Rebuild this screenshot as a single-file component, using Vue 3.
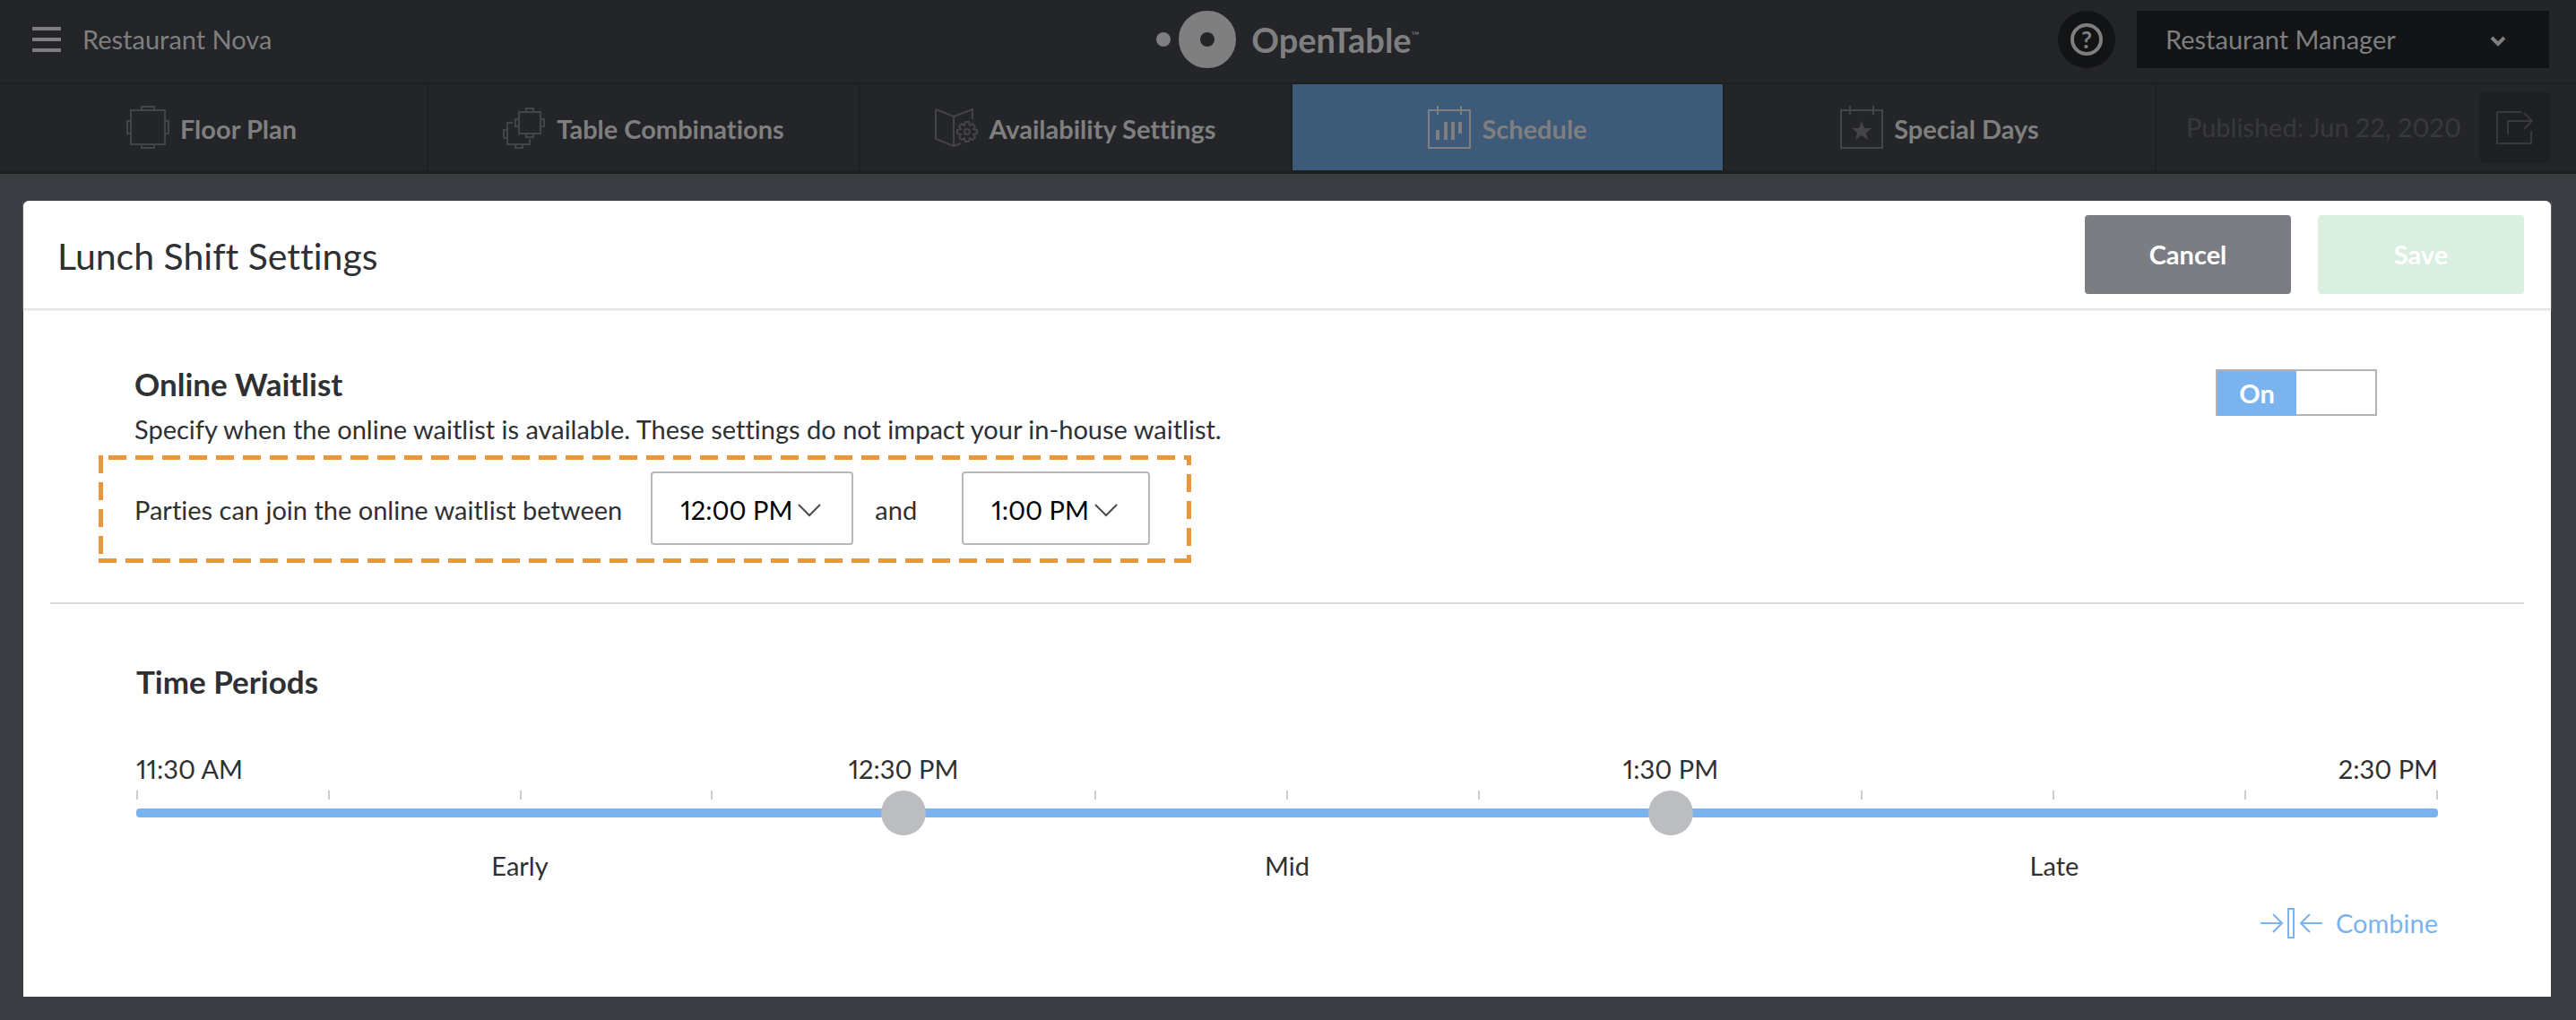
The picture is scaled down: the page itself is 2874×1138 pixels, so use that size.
<template>
    <div class="page">
        <header class="topbar">
            <div class="topbar-left">
                <button type="button" class="menu-button" aria-label="Menu">
                    <span></span>
                    <span></span>
                    <span></span>
                </button>
                <span class="restaurant">Restaurant Nova</span>
            </div>
            <a href="#" class="logo">
                <svg width="90" height="64" viewBox="0 0 90 64" aria-hidden="true">
                    <circle cx="8" cy="32" r="8" fill="currentColor" />
                    <circle cx="57" cy="32" r="20" fill="none" stroke="currentColor" stroke-width="24" />
                </svg>
                <span class="logo-text">OpenTable</span>
                <span class="logo-mark">™</span>
            </a>
            <div class="topbar-right">
                <button type="button" class="help-button" aria-label="Help">
                    <span>?</span>
                </button>
                <div class="role-select">
                    <select v-model="role" aria-label="Role">
                        <option>Restaurant Manager</option>
                        <option>Host</option>
                    </select>
                    <svg width="18" height="12" viewBox="0 0 18 12" aria-hidden="true">
                        <path d="M2 2l7 7 7-7" fill="none" stroke="currentColor" stroke-width="4" />
                    </svg>
                </div>
            </div>
        </header>

        <nav class="tabs">
            <a
                v-for="tab in tabs"
                :key="tab.id"
                href="#"
                class="tab"
                :class="{ active: tab.id === activeTab }"
                @click.prevent="activeTab = tab.id"
            >
                <svg class="tab-icon" width="48" height="48" viewBox="0 0 48 48" aria-hidden="true">
                    <g v-if="tab.id === 'floor'">
                        <rect x="5" y="5" width="38" height="38" />
                        <path d="M17 5V1h14v4M17 43v4h14v-4M5 17H1v14h4M43 17h4v14h-4" />
                    </g>
                    <g v-else-if="tab.id === 'combos'">
                        <rect x="18" y="7" width="24" height="24" />
                        <path d="M26 7V3h8v4M26 31v4h8v-4M18 15h-4v8h4M42 15h4v8h-4" />
                        <path d="M11 19H5v24h25v-6M5 27H1v9h4M14 43v4h8v-4" />
                    </g>
                    <g v-else-if="tab.id === 'availability'">
                        <path d="M1 4l20 8 21-8v11M1 4v33l20 8 8-3M21 12v33" />
                        <circle cx="36" cy="29" r="3" />
                        <path
                            d="M34 18h4l1 4 3-2 3 3-2 3 4 1v4l-4 1 2 3-3 3-3-2-1 4h-4l-1-4-3 2-3-3 2-3-4-1v-4l4-1-2-3 3-3 3 2z"
                        />
                    </g>
                    <g v-else-if="tab.id === 'schedule'">
                        <rect x="1" y="5" width="46" height="42" />
                        <path d="M11 0v10M37 0v10" />
                        <path d="M11 27v11M20 18v20M28 18v20M36 18v13" stroke-width="4" />
                    </g>
                    <g v-else>
                        <rect x="1" y="5" width="46" height="42" />
                        <path d="M11 0v10M37 0v10" />
                        <path
                            class="filled"
                            d="M24 17l3 8h8l-6 5 2 8-7-5-7 5 2-8-6-5h8z"
                        />
                    </g>
                </svg>
                <span>{{ tab.title }}</span>
            </a>
            <div class="published">
                <span>Published: Jun 22, 2020</span>
                <button type="button" class="publish-button" aria-label="Publish">
                    <svg width="42" height="40" viewBox="0 0 42 40" aria-hidden="true">
                        <path
                            d="M28 3H1v35h38V24M13 28V13h27M31 4l9 9-9 9"
                            fill="none"
                            stroke="currentColor"
                            stroke-width="2"
                        />
                    </svg>
                </button>
            </div>
        </nav>

        <main class="card">
            <div class="card-header">
                <h1>Lunch Shift Settings</h1>
                <div class="actions">
                    <button type="button" class="btn btn-cancel">Cancel</button>
                    <button type="button" class="btn btn-save" disabled>Save</button>
                </div>
            </div>

            <section class="waitlist">
                <div class="waitlist-body">
                    <h2>Online Waitlist</h2>
                    <p>
                        Specify when the online waitlist is available. These settings do not impact
                        your in-house waitlist.
                    </p>
                    <div class="highlight">
                        <label for="from">Parties can join the online waitlist between</label>
                        <div class="time-select">
                            <select id="from" v-model="from">
                                <option v-for="time in times" :key="time">{{ time }}</option>
                            </select>
                            <svg width="26" height="16" viewBox="0 0 26 16" aria-hidden="true">
                                <path d="M1 1l12 12L25 1" />
                            </svg>
                        </div>
                        <label for="to" class="and">and</label>
                        <div class="time-select">
                            <select id="to" v-model="to">
                                <option v-for="time in times" :key="time">{{ time }}</option>
                            </select>
                            <svg width="26" height="16" viewBox="0 0 26 16" aria-hidden="true">
                                <path d="M1 1l12 12L25 1" />
                            </svg>
                        </div>
                    </div>
                </div>
                <label class="toggle" :class="{ off: !enabled }">
                    <input v-model="enabled" type="checkbox" aria-label="Online Waitlist" />
                    <span>{{ enabled ? "On" : "Off" }}</span>
                </label>
            </section>

            <section class="periods">
                <h2>Time Periods</h2>
                <div class="hours">
                    <span>11:30 AM</span>
                    <span>{{ formatTime(firstSplit) }}</span>
                    <span>{{ formatTime(secondSplit) }}</span>
                    <span>2:30 PM</span>
                </div>
                <div class="slider">
                    <div class="ticks">
                        <i v-for="n in 13" :key="n"></i>
                    </div>
                    <div class="track"></div>
                    <input
                        v-model.number="firstSplit"
                        type="range"
                        min="0"
                        max="180"
                        step="15"
                        aria-label="Early ends"
                    />
                    <input
                        v-model.number="secondSplit"
                        type="range"
                        min="0"
                        max="180"
                        step="15"
                        aria-label="Late starts"
                    />
                </div>
                <div class="names" :style="{ gridTemplateColumns: nameColumns }">
                    <span>Early</span>
                    <span>Mid</span>
                    <span>Late</span>
                </div>
                <button type="button" class="combine">
                    <svg width="70" height="34" viewBox="0 0 70 34" aria-hidden="true">
                        <path
                            d="M0 17h24M14 7l10 10-10 10M31 1h6v32h-6zM69 17H45M55 7L45 17l10 10"
                            fill="none"
                            stroke="currentColor"
                            stroke-width="2"
                        />
                    </svg>
                    <span>Combine</span>
                </button>
            </section>
        </main>
    </div>
</template>

<script setup>
import { computed, ref } from "vue";

const tabs = [
    { id: "floor", title: "Floor Plan" },
    { id: "combos", title: "Table Combinations" },
    { id: "availability", title: "Availability Settings" },
    { id: "schedule", title: "Schedule" },
    { id: "special", title: "Special Days" },
];

const times = ["11:30 AM", "12:00 PM", "12:30 PM", "1:00 PM", "1:30 PM", "2:00 PM", "2:30 PM"];

const activeTab = ref("schedule");
const role = ref("Restaurant Manager");
const from = ref("12:00 PM");
const to = ref("1:00 PM");
const enabled = ref(true);

// minutes after 11:30 AM
const firstSplit = ref(60);
const secondSplit = ref(120);

const nameColumns = computed(
    () => `${firstSplit.value}fr ${secondSplit.value - firstSplit.value}fr ${180 - secondSplit.value}fr`
);

const formatTime = (offset) => {
    const total = 11 * 60 + 30 + offset;
    const hour = Math.floor(total / 60);
    const minutes = String(total % 60).padStart(2, "0");
    return `${hour > 12 ? hour - 12 : hour}:${minutes} ${hour >= 12 ? "PM" : "AM"}`;
};
</script>

<style>
body {
    margin: 0;
    background: #3c3d42;
}
</style>

<style scoped>
.page {
    box-sizing: border-box;
    min-height: 100vh;
    overflow-x: hidden;
    font-family: Lato, "Liberation Sans", sans-serif;
    font-size: 29px;
    font-variant-ligatures: none;
    font-variant-numeric: proportional-nums;
    line-height: 40px;
    color: #2f3033;
}

.page * {
    box-sizing: border-box;
}

button,
select {
    font: inherit;
    font-variant-ligatures: none;
    font-variant-numeric: proportional-nums;
    cursor: pointer;
}

button {
    border: 0;
    padding: 0;
}

h1,
h2,
p {
    margin: 0;
}

.topbar {
    display: grid;
    grid-template-columns: 1fr auto 1fr;
    align-items: center;
    height: 94px;
    padding: 0 30px 4px;
    border-bottom: 2px solid #1e1f21;
    background: #242529;
    color: #7f7f7f;
}

.topbar-left {
    display: flex;
    align-items: center;
    gap: 24px;
    padding-left: 6px;
}

.menu-button {
    display: flex;
    flex-direction: column;
    gap: 8px;
    width: 32px;
    background: none;
}

.menu-button span {
    height: 4px;
    background: #7f7f7f;
}

.logo {
    display: flex;
    align-items: center;
    color: #7f7f7f;
    text-decoration: none;
}

.logo-text {
    margin-left: 16px;
    font-size: 38px;
    font-weight: 700;
}

.logo-mark {
    align-self: flex-start;
    margin-top: 8px;
    font-size: 12px;
}

.topbar-right {
    display: flex;
    justify-content: flex-end;
    gap: 24px;
}

.help-button {
    display: flex;
    align-items: center;
    justify-content: center;
    width: 64px;
    height: 64px;
    border-radius: 50%;
    background: #131416;
    color: #7f7f7f;
}

.help-button span {
    width: 36px;
    height: 36px;
    border: 4px solid #7f7f7f;
    border-radius: 50%;
    font-size: 26px;
    font-weight: 700;
    line-height: 28px;
}

.role-select {
    position: relative;
    width: 460px;
}

.role-select select {
    width: 100%;
    height: 64px;
    padding: 0 32px;
    border: 0;
    border-radius: 0;
    appearance: none;
    background: #131416;
    color: #7f7f7f;
}

.role-select svg {
    position: absolute;
    top: 28px;
    right: 48px;
    pointer-events: none;
}

.tabs {
    display: grid;
    grid-template-columns: repeat(5, 1fr) 468px;
    height: 100px;
    margin-left: -4px;
    border-bottom: 4px solid #1e1f21;
    background: #242529;
}

.tab {
    display: flex;
    align-items: center;
    justify-content: center;
    gap: 12px;
    border-right: 2px solid #1e1f21;
    color: #7f7f7f;
    font-weight: 700;
    text-decoration: none;
    white-space: nowrap;
}

.tab span {
    padding-top: 3px;
}

.tab.active {
    background: #3d5a78;
    background-clip: padding-box;
}

.tab-icon {
    fill: none;
    stroke: #434446;
    stroke-width: 2;
}

.tab-icon .filled {
    fill: #434446;
    stroke: none;
}

.tab.active .tab-icon {
    stroke: #7f7f7f;
}

.published {
    display: flex;
    align-items: center;
    justify-content: flex-end;
    gap: 20px;
    padding: 0 28px 0 0;
    color: #38393c;
    white-space: nowrap;
}

.publish-button {
    display: flex;
    align-items: center;
    justify-content: center;
    width: 80px;
    height: 80px;
    border-radius: 8px;
    background: #1e1f22;
    color: #38393c;
}

.card {
    margin: 30px 28px 26px 26px;
    border-radius: 6px 6px 0 0;
    background: #fff;
}

.card-header {
    display: flex;
    align-items: center;
    justify-content: space-between;
    padding: 16px 30px 16px 38px;
    border-bottom: 2px solid #e4e5e6;
    box-shadow: 0 1px 1px #f4f4f5;
}

.card-header h1 {
    padding-top: 3px;
    font-size: 41px;
    font-weight: 400;
    line-height: 48px;
}

.actions {
    display: flex;
    gap: 30px;
}

.btn {
    width: 230px;
    height: 88px;
    border-radius: 4px;
    color: #fff;
    font-weight: 700;
}

.btn-cancel {
    background: #7c7d82;
}

.btn-save {
    background: #daefe0;
}

h2 {
    font-size: 35px;
    font-weight: 700;
    line-height: 48px;
}

.waitlist {
    display: flex;
    justify-content: space-between;
    margin: 0 30px;
    padding: 58px 164px 44px 54px;
    border-bottom: 2px solid #d8d9da;
}

.waitlist h2,
.waitlist p {
    padding-left: 40px;
}

.waitlist p {
    padding: 2px 0 4px 40px;
    line-height: 50px;
}

/* 20px dashes with 10px gaps on each side */
.highlight {
    display: flex;
    align-items: center;
    width: max-content;
    padding: 18px 46px 20px 40px;
    background:
        repeating-linear-gradient(90deg, #e9973d 0 20px, transparent 20px 30px) 11px 0 / 100% 5px no-repeat,
        repeating-linear-gradient(90deg, #e9973d 0 20px, transparent 20px 30px) 0 100% / 100% 5px no-repeat,
        repeating-linear-gradient(180deg, #e9973d 0 20px, transparent 20px 30px) 0 0 / 5px 100% no-repeat,
        repeating-linear-gradient(180deg, #e9973d 0 11px, transparent 11px 21px, #e9973d 21px 30px) 100% 0 / 5px 100% no-repeat;
}

.highlight label {
    margin-right: 32px;
    padding-top: 3px;
}

.highlight .and {
    margin: 0 50px 0 24px;
}

.time-select {
    position: relative;
}

.time-select select {
    display: block;
    height: 82px;
    padding: 3px 66px 0 31px;
    border: 2px solid #b8b8b8;
    border-radius: 4px;
    appearance: none;
    field-sizing: content;
    background: #fff;
    color: #000;
}

.time-select svg {
    position: absolute;
    top: 36px;
    right: 36px;
    fill: none;
    stroke: #4a4b50;
    stroke-width: 2;
    pointer-events: none;
}

.toggle {
    display: grid;
    grid-template-columns: 1fr 1fr;
    width: 180px;
    height: 52px;
    margin-top: 8px;
    border: 2px solid #b3b3b3;
    cursor: pointer;
}

.toggle input {
    position: absolute;
    opacity: 0;
}

.toggle span {
    background: #7bb3ee;
    color: #fff;
    font-weight: 700;
    line-height: 50px;
    text-align: center;
}

.toggle.off span {
    grid-column: 2;
    background: #b3b3b3;
}

.periods {
    padding: 62px 126px 62px;
}

.hours {
    display: grid;
    grid-template-columns: 1fr 2fr 2fr 1fr;
    margin-top: 54px;
    text-align: center;
}

.hours span:first-child {
    text-align: left;
}

.hours span:last-child {
    text-align: right;
}

.slider {
    position: relative;
    margin-top: 4px;
}

.ticks {
    display: flex;
    justify-content: space-between;
}

.ticks i {
    width: 2px;
    height: 10px;
    background: #cbccce;
}

.track {
    height: 10px;
    margin-top: 10px;
    border-radius: 4px;
    background: #7bb3ee;
}

/* half a thumb wider than the track on both ends, so thumbs centre on ticks */
.slider input {
    position: absolute;
    top: 0;
    left: -25px;
    width: calc(100% + 50px);
    height: 50px;
    margin: 0;
    appearance: none;
    background: none;
    pointer-events: none;
}

.slider input::-webkit-slider-thumb {
    width: 50px;
    height: 50px;
    border: 0;
    border-radius: 50%;
    appearance: none;
    background: #bbbdc0;
    pointer-events: auto;
    cursor: pointer;
}

.names {
    display: grid;
    margin-top: 34px;
    text-align: center;
}

.combine {
    display: flex;
    align-items: center;
    gap: 14px;
    margin: 24px 0 0 auto;
    background: none;
    color: #7bb3ee;
}
</style>
